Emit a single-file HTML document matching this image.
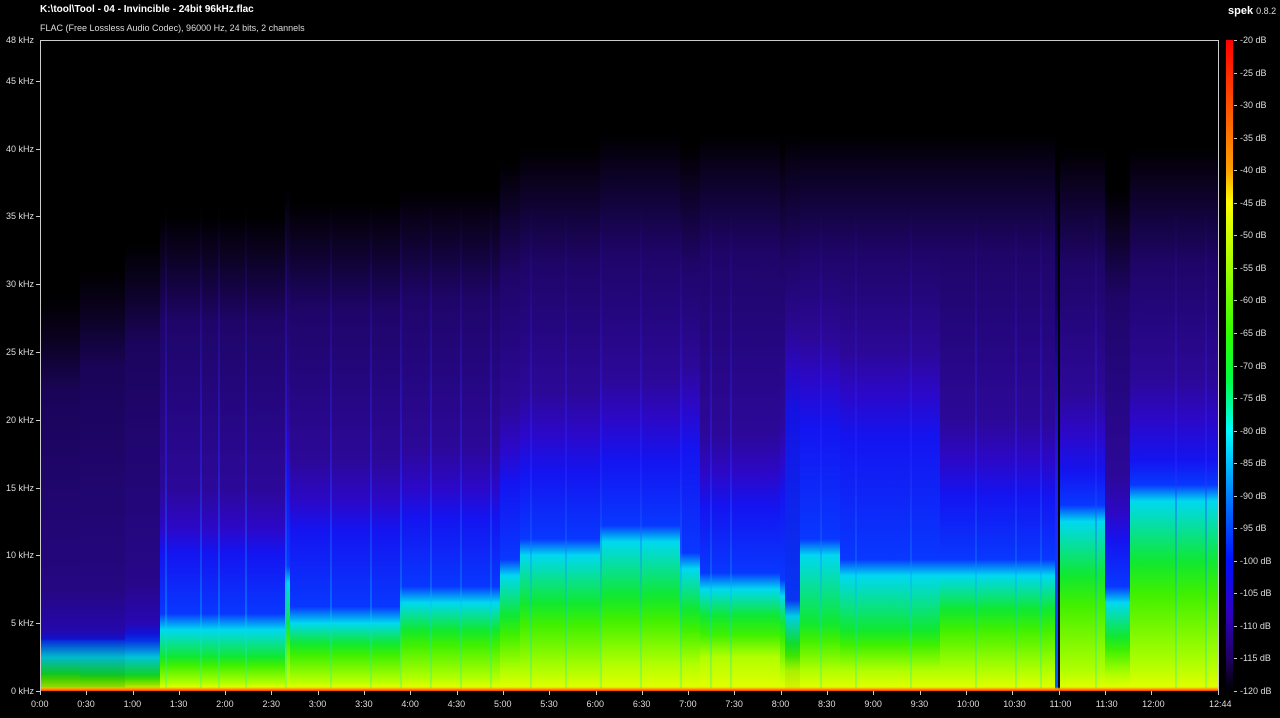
<!DOCTYPE html>
<html><head><meta charset="utf-8"><style>
body{margin:0;width:1280px;height:718px;background:#000;overflow:hidden;position:relative;font-family:"Liberation Sans",Arial,sans-serif;color:#fff}
.t{position:absolute;white-space:nowrap}
#plot{position:absolute;left:40px;top:40px;width:1179px;height:651px;overflow:hidden;background:#000}
#plot div{position:absolute;top:0;height:651px}
#frame{position:absolute;left:40px;top:40px;width:1179px;height:651px;border-left:1px solid #ccc;border-top:1px solid #ccc;border-right:1px solid #ccc;box-sizing:border-box}
.yl{position:absolute;font-size:9px;color:#ddd;right:1246px;text-align:right}
.xl{position:absolute;font-size:9px;color:#ddd;top:699px}
.dl{position:absolute;font-size:9px;color:#ddd;left:1240px}
.tk{position:absolute;background:#ccc}
#cb{position:absolute;left:1226px;top:40px;width:7px;height:651px;background:linear-gradient(to bottom,#ff0000 0%,#ff5000 10%,#ffa000 20%,#ffff00 25%,#a0ff00 35%,#30ff00 45%,#00ff40 52%,#00ffff 60%,#0080ff 70%,#0010ff 80%,#3000c0 88%,#200060 95%,#000 100%)}
</style></head><body>
<div class="t" style="left:40px;top:4px;font-size:10px;font-weight:bold">K:\tool\Tool - 04 - Invincible - 24bit 96kHz.flac</div>
<div class="t" style="left:40px;top:23px;font-size:9px;color:#ddd">FLAC (Free Lossless Audio Codec), 96000 Hz, 24 bits, 2 channels</div>
<div class="t" style="left:1228px;top:5px;font-size:11px;font-weight:bold">spek <span style="font-weight:normal;font-size:9px;color:#ddd">0.8.2</span></div>
<div id="plot"></div>
<div id="frame"></div>
<div id="cb"></div>
<div id="lab"></div>
<script>
var segs=[
[0,40,0.3,1.3,2.5,4.5,26,0.85],
[40,85,0.3,1.2,2.5,4.5,28,0.85],
[85,120,0.4,1.2,2.5,5,30,0.9],
[120,245,0.6,2.5,4.5,12,32,1],
[245,250,1.2,5,8,18,34,1],
[250,360,0.8,3.5,5,14,33,1],
[360,460,1,4.5,6.5,15,34,1],
[460,480,1.5,5.5,8.5,18,36,1],
[480,560,1.5,6.5,10,19,37,1],
[560,640,2,7,11,20,38,1],
[640,660,2,6,9,21,37,1],
[660,740,2.5,5.5,7.5,16,38,1],
[740,745,1.5,5,7,17,37,1],
[745,760,1.5,3.5,5.5,24,38,0.95],
[760,800,1.5,5,10,23,38,1],
[800,900,1.5,4.5,8.5,22,38,1],
[900,1015,1.5,6,8.5,17,38,1],
[1015,1020,0,0,0,0,0,0],
[1020,1065,1.5,8.5,12.5,19,37,1],
[1065,1090,1.2,4,6.5,13,34,1],
[1090,1179,2,9.5,14,20,37,1]];
var p=document.getElementById('plot'),h='';
function pc(k){return (k/48*100).toFixed(2)+'%'}
segs.forEach(function(s){
 var y=s[2],g=s[3],c=s[4],b=s[5],u=s[6];
 var bg;
 if(u==0)bg='linear-gradient(to top,#ff6000 0,#80ff00 1%,#1030c0 1.5%,#100050 3%,#000 10%)';
 else bg='linear-gradient(to top,#ff4000 0,#ffd000 0.3%,#e0ff00 0.6%,#b0ff00 '+pc(y)+',#40f000 '+pc(g*0.75)+',#10e830 '+pc(g)+',#00d8f0 '+pc(c)+',#0838ff '+pc(c+1.2)+',#1414f0 '+pc(b*0.85)+',#2c08c8 '+pc(b)+',#2c0898 '+pc(b+3)+',#1e0568 '+pc(u*0.85)+',#0c0224 '+pc(u)+',#000 '+pc(u+3)+')';
 h+='<div style="left:'+s[0]+'px;width:'+(s[1]-s[0])+'px;background:'+bg+';opacity:'+s[7]+'"></div>';
});
var st=[125,160,178,205,245,290,330,360,390,420,450,490,525,560,600,640,670,690,780,815,870,935,975,1000,1055,1135,1165];
st.forEach(function(x,i){h+='<div style="left:'+x+'px;width:2px;background:linear-gradient(to top,rgba(60,255,120,.4) 0,rgba(0,200,255,.35) 12%,rgba(40,40,255,.45) 35%,rgba(50,20,200,.25) 60%,transparent 75%)"></div>'});
h+='<div style="left:1015px;width:3px;background:linear-gradient(to top,#0060ff 0,#2020ff 30%,#100060 60%,#000 80%)"></div>';
h+='<div style="left:0;width:1179px;top:647px;height:4px;background:linear-gradient(to top,#ff3000,#ffa000 50%,transparent)"></div>';
p.innerHTML=h;
var L='';
for(var k=0;k<=45;k+=5){var y=691-k*13.5625;L+='<div class="yl" style="top:'+(y-5)+'px">'+k+' kHz</div><div class="tk" style="left:36px;top:'+Math.round(y)+'px;width:4px;height:1px"></div>';}
L+='<div class="yl" style="top:35px">48 kHz</div>';
for(var s=0;s<=720;s+=30){var x=40+s*1179/764;var m=Math.floor(s/60),ss=s%60;L+='<div class="xl" style="left:'+(x-9)+'px">'+m+':'+(ss<10?'0':'')+ss+'</div><div class="tk" style="left:'+Math.round(x)+'px;top:691px;width:1px;height:4px"></div>';}
L+='<div class="xl" style="left:1209px">12:44</div><div class="tk" style="left:1218px;top:691px;width:1px;height:4px"></div>';
for(var d=20;d<=120;d+=5){var y=40+(d-20)*6.51;L+='<div class="dl" style="top:'+(y-5)+'px">-'+d+' dB</div><div class="tk" style="left:1234px;top:'+Math.round(y)+'px;width:3px;height:1px"></div>';}
document.getElementById('lab').innerHTML=L;
</script>
</body></html>
